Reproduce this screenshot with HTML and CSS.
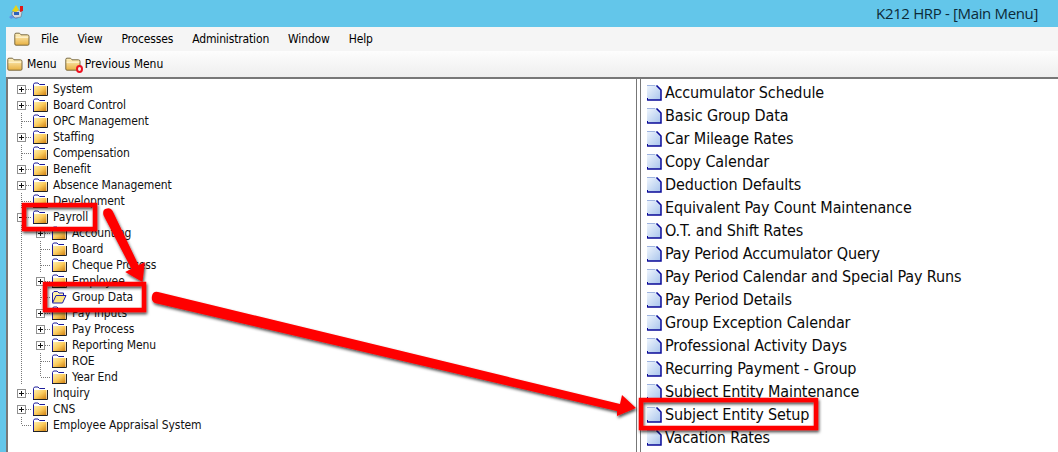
FILE: index.html
```html
<!DOCTYPE html>
<html lang="en">
<head>
<meta charset="utf-8">
<title>K212 HRP - [Main Menu]</title>
<link rel="stylesheet" href="styles.css">
</head>
<body>
<svg class="defs" width="0" height="0" aria-hidden="true">
  <defs>
    <linearGradient id="fg" x1="0" y1="0" x2="1" y2="1">
      <stop offset="0" stop-color="#fff0ae"/><stop offset="0.5" stop-color="#fbcb5c"/><stop offset="1" stop-color="#cf7f10"/>
    </linearGradient>
    <linearGradient id="tf" x1="0" y1="0" x2="0" y2="1">
      <stop offset="0" stop-color="#fff3c4"/><stop offset="1" stop-color="#e8b040"/>
    </linearGradient>
    <linearGradient id="pg" x1="0" y1="0" x2="1" y2="1">
      <stop offset="0" stop-color="#f0f6fd"/><stop offset="1" stop-color="#a8c4ec"/>
    </linearGradient>
    <symbol id="folder" viewBox="0 0 16 14">
      <path d="M1.5 13V2.5L2.5 1H6L7.5 2.5H13" fill="none" stroke="#1c1c9a"/>
      <path d="M2 13V4H14.5V13Z" fill="url(#fg)"/>
      <path d="M1 13.5H15.5V4" fill="none" stroke="#222"/>
    </symbol>
    <symbol id="openfolder" viewBox="0 0 16 14">
      <path d="M1.5 12V3L3 1.5H6.5L8 3H12.5V5" fill="#fff2a8" stroke="#1c1ca8"/>
      <path d="M1.5 13L5 5.5H15L11.5 13Z" fill="#fde47c" stroke="#1c1ca8"/>
    </symbol>
    <symbol id="tbfolder" viewBox="0 0 16 14">
      <path d="M.8 12V2.4Q.8 1.2 2 1.2H5.5L7 2.8H13.4Q15 2.8 15 4.4V12Q15 13.2 13.8 13.2H2Q.8 13.2.8 12Z" fill="url(#tf)" stroke="#7a6a42"/>
      <path d="M1.6 5.2H14.2" stroke="#fff8dc"/>
    </symbol>
    <symbol id="page" viewBox="0 0 15 16">
      <path d="M0 0H10L14 4V15H0Z" fill="url(#pg)"/>
      <path d="M0 .5H8" stroke="#9fb4e0"/>
      <path d="M9.5 .5L14 5V15H.5" fill="none" stroke="#0a0a98" stroke-width="1.5"/>
      <path d="M.5 15.5V13" stroke="#0a0a98"/>
    </symbol>
  </defs>
</svg>

<header class="titlebar">
  <svg class="appicon" width="16" height="16" viewBox="0 0 16 16" aria-hidden="true">
    <path d="M1 13l3-2 3 1 3 3-5-1-2 1Z" fill="#5f95e6"/>
    <path d="M4 8l7-2 3 2-1 5-6 1-3-3Z" fill="#d4d8de" stroke="#6a7080" stroke-width=".6"/>
    <rect x="6" y="8" width="5" height="3" fill="#2f62b8"/>
    <path d="M4 7L8 1l3 5-3 2Z" fill="#e8d414"/>
    <path d="M12 2h3v5l-3 1Z" fill="#e01818"/>
  </svg>
  <span class="apptitle">K212 HRP - [Main Menu]</span>
</header>

<div class="window">
  <nav class="menubar">
    <svg class="menufolder" width="16" height="14"><use href="#tbfolder"/></svg>
    <span class="menuitem">File</span>
    <span class="menuitem">View</span>
    <span class="menuitem">Processes</span>
    <span class="menuitem">Administration</span>
    <span class="menuitem">Window</span>
    <span class="menuitem">Help</span>
  </nav>
  <div class="toolbar">
    <span class="tool">
      <svg width="16" height="14"><use href="#tbfolder"/></svg>Menu
    </span>
    <span class="tool">
      <span class="prevmark">
        <svg width="16" height="14"><use href="#tbfolder"/></svg>
        <span class="reddot"></span>
      </span>Previous Menu
    </span>
  </div>

  <main class="panes">
    <section class="tree">
      <div class="row"><i class="c plus first"></i><svg class="f"><use href="#folder"/></svg><span class="t">System</span></div>
      <div class="row"><i class="c plus"></i><svg class="f"><use href="#folder"/></svg><span class="t">Board Control</span></div>
      <div class="row"><i class="c tee"></i><svg class="f"><use href="#folder"/></svg><span class="t">OPC Management</span></div>
      <div class="row"><i class="c plus"></i><svg class="f"><use href="#folder"/></svg><span class="t">Staffing</span></div>
      <div class="row"><i class="c tee"></i><svg class="f"><use href="#folder"/></svg><span class="t">Compensation</span></div>
      <div class="row"><i class="c plus"></i><svg class="f"><use href="#folder"/></svg><span class="t">Benefit</span></div>
      <div class="row"><i class="c plus"></i><svg class="f"><use href="#folder"/></svg><span class="t">Absence Management</span></div>
      <div class="row"><i class="c tee"></i><svg class="f"><use href="#folder"/></svg><span class="t">Development</span></div>
      <div class="row"><i class="c minus"></i><svg class="f"><use href="#folder"/></svg><span class="t">Payroll</span></div>
      <div class="row"><i class="c line"></i><i class="c plus"></i><svg class="f"><use href="#folder"/></svg><span class="t">Accounting</span></div>
      <div class="row"><i class="c line"></i><i class="c tee"></i><svg class="f"><use href="#folder"/></svg><span class="t">Board</span></div>
      <div class="row"><i class="c line"></i><i class="c tee"></i><svg class="f"><use href="#folder"/></svg><span class="t">Cheque Process</span></div>
      <div class="row"><i class="c line"></i><i class="c plus"></i><svg class="f"><use href="#folder"/></svg><span class="t">Employee</span></div>
      <div class="row"><i class="c line"></i><i class="c tee"></i><svg class="f"><use href="#openfolder"/></svg><span class="t">Group Data</span></div>
      <div class="row"><i class="c line"></i><i class="c plus"></i><svg class="f"><use href="#folder"/></svg><span class="t">Pay Inputs</span></div>
      <div class="row"><i class="c line"></i><i class="c plus"></i><svg class="f"><use href="#folder"/></svg><span class="t">Pay Process</span></div>
      <div class="row"><i class="c line"></i><i class="c plus"></i><svg class="f"><use href="#folder"/></svg><span class="t">Reporting Menu</span></div>
      <div class="row"><i class="c line"></i><i class="c tee"></i><svg class="f"><use href="#folder"/></svg><span class="t">ROE</span></div>
      <div class="row"><i class="c line"></i><i class="c ell"></i><svg class="f"><use href="#folder"/></svg><span class="t">Year End</span></div>
      <div class="row"><i class="c plus"></i><svg class="f"><use href="#folder"/></svg><span class="t">Inquiry</span></div>
      <div class="row"><i class="c plus"></i><svg class="f"><use href="#folder"/></svg><span class="t">CNS</span></div>
      <div class="row"><i class="c ell"></i><svg class="f"><use href="#folder"/></svg><span class="t">Employee Appraisal System</span></div>
    </section>
    <section class="list">
      <div class="item"><svg class="p"><use href="#page"/></svg>Accumulator Schedule</div>
      <div class="item"><svg class="p"><use href="#page"/></svg>Basic Group Data</div>
      <div class="item"><svg class="p"><use href="#page"/></svg>Car Mileage Rates</div>
      <div class="item"><svg class="p"><use href="#page"/></svg>Copy Calendar</div>
      <div class="item"><svg class="p"><use href="#page"/></svg>Deduction Defaults</div>
      <div class="item"><svg class="p"><use href="#page"/></svg>Equivalent Pay Count Maintenance</div>
      <div class="item"><svg class="p"><use href="#page"/></svg>O.T. and Shift Rates</div>
      <div class="item"><svg class="p"><use href="#page"/></svg>Pay Period Accumulator Query</div>
      <div class="item"><svg class="p"><use href="#page"/></svg>Pay Period Calendar and Special Pay Runs</div>
      <div class="item"><svg class="p"><use href="#page"/></svg>Pay Period Details</div>
      <div class="item"><svg class="p"><use href="#page"/></svg>Group Exception Calendar</div>
      <div class="item"><svg class="p"><use href="#page"/></svg>Professional Activity Days</div>
      <div class="item"><svg class="p"><use href="#page"/></svg>Recurring Payment - Group</div>
      <div class="item"><svg class="p"><use href="#page"/></svg>Subject Entity Maintenance</div>
      <div class="item"><svg class="p"><use href="#page"/></svg>Subject Entity Setup</div>
      <div class="item"><svg class="p"><use href="#page"/></svg>Vacation Rates</div>
    </section>
  </main>
</div>

<svg class="annot" width="1058" height="452" viewBox="0 0 1058 452" aria-hidden="true">
  <defs>
    <filter id="sh" x="-10%" y="-10%" width="120%" height="120%">
      <feDropShadow dx="1" dy="2" stdDeviation="1.5" flood-color="#000" flood-opacity=".7"/>
    </filter>
  </defs>
  <g filter="url(#sh)">
    <path d="M103.5 215.2Q102 209 107 208.5 111 207.5 112.5 210.8L138.6 265.2 144.8 262.1 142.5 282 125.2 271.9 131.4 268.8Z" fill="#f00"/>
    <path d="M158 292L620 404 622 395 636 408 617 416 617 411 155 303Q151 301 152 296 153 291 158 292Z" fill="#f00"/>
    <rect x="24" y="205" width="71" height="24" fill="none" stroke="#f00" stroke-width="4.5"/>
    <rect x="45" y="284" width="99" height="26" fill="none" stroke="#f00" stroke-width="4.5"/>
    <rect x="641" y="400" width="175" height="28" fill="none" stroke="#f00" stroke-width="4.5"/>
  </g>
</svg>
</body>
</html>
```
FILE: styles.css
```css
* { box-sizing: border-box; }
html, body { margin: 0; height: 452px; overflow: hidden; }
body {
  background: #63c6ea;
  font-family: "DejaVu Sans", sans-serif;
  color: #000;
  position: relative;
}
.defs { position: absolute; }
.titlebar {
  height: 27px;
  display: flex;
  align-items: center;
  justify-content: space-between;
  padding: 0 20px 0 8px;
}
.appicon { display: block; position: relative; top: -2px; }
.apptitle {
  font: 15px "Open Sans", sans-serif;
  letter-spacing: -.35px;
  color: #0c2a38;
  position: relative;
  top: -1px;
}
.window {
  margin-left: 6px;
  height: 425px;
  display: flex;
  flex-direction: column;
  background: #f5f5f5;
}
.menubar {
  height: 24px;
  display: flex;
  align-items: center;
  padding-left: 8px;
  background: #f5f5f5;
  font: 12px "DejaVu Sans Condensed", "DejaVu Sans", sans-serif;
  font-stretch: condensed;
  letter-spacing: -.15px;
}
.menufolder { margin-right: 11px; }
.menuitem { margin-right: 19px; }
.toolbar {
  height: 28px;
  display: flex;
  align-items: center;
  gap: 8px;
  padding-left: 1px;
  background: linear-gradient(#fdfdfd, #eeeeee);
  border-bottom: 2px solid #777;
  font: 12px "DejaVu Sans Condensed", "DejaVu Sans", sans-serif;
  font-stretch: condensed;
}
.tool { display: flex; align-items: center; gap: 4px; }
.prevmark { position: relative; display: block; width: 16px; height: 14px; }
.prevmark svg { display: block; }
.reddot {
  position: absolute;
  right: -2px;
  bottom: -2px;
  width: 7px;
  height: 8px;
  border: 2px solid #ee1020;
  border-radius: 50%;
  background: #f3efe6;
}
.panes {
  flex: 1;
  min-height: 0;
  display: flex;
  background: #fff;
  border-left: 2px solid #777;
}
.tree {
  width: 629px;
  padding: 2px 0 0 4px;
  font: 12px "DejaVu Sans Condensed", "DejaVu Sans", sans-serif;
  font-stretch: condensed;
  letter-spacing: -.1px;
  border-right: 1px solid #777;
}
.row { height: 16px; display: flex; align-items: center; white-space: nowrap; color: #111; }
.c { display: block; flex: none; width: 19px; height: 16px; position: relative; }
.c::before, .c::after { content: ""; position: absolute; }
.line::before, .plus::before, .minus::before, .tee::before {
  left: 9px; top: 0; width: 1px; height: 16px;
  background: repeating-linear-gradient(#777 0 1px, transparent 1px 2px);
}
.ell::before {
  left: 9px; top: 0; width: 1px; height: 8px;
  background: repeating-linear-gradient(#777 0 1px, transparent 1px 2px);
}
.plus::after, .minus::after, .tee::after, .ell::after {
  left: 10px; top: 8px; width: 9px; height: 1px;
  background: repeating-linear-gradient(90deg, #777 0 1px, transparent 1px 2px);
}
.first::before { top: 8px; height: 8px; }
.plus, .minus { background-repeat: no-repeat; }
.plus::after, .minus::after { left: 14px; width: 5px; }
.plus::before, .minus::before { z-index: -1; }
.plus {
  background-image:
    linear-gradient(#111, #111), linear-gradient(#111, #111),
    linear-gradient(#fff, #fff), linear-gradient(#909090, #909090);
  background-size: 5px 1px, 1px 5px, 7px 7px, 9px 9px;
  background-position: 7px 8px, 9px 6px, 6px 5px, 5px 4px;
}
.minus {
  background-image:
    linear-gradient(#111, #111),
    linear-gradient(#fff, #fff), linear-gradient(#909090, #909090);
  background-size: 5px 1px, 7px 7px, 9px 9px;
  background-position: 7px 8px, 6px 5px, 5px 4px;
}
.f { flex: none; width: 16px; height: 14px; margin: 0 5px 0 1px; display: block; }
.list {
  flex: 1;
  margin-left: 3px;
  border-left: 1px solid #777;
  padding: 2px 0 0 6px;
  font: 16px "DejaVu Sans Condensed", "DejaVu Sans", sans-serif;
  font-stretch: condensed;
  letter-spacing: -.13px;
  overflow: hidden;
}
.item { height: 23px; display: flex; align-items: center; white-space: nowrap; color: #0a0a0a; }
.p { flex: none; width: 15px; height: 16px; margin-right: 3px; display: block; }
.annot { position: absolute; left: 0; top: 0; pointer-events: none; }
```
